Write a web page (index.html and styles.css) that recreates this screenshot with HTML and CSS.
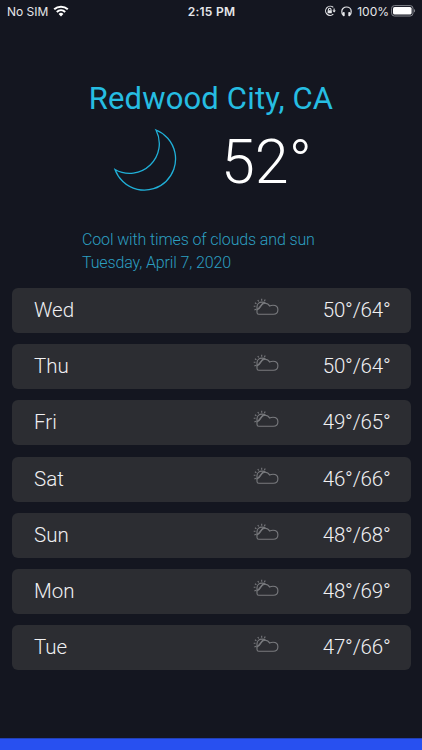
FILE: index.html
```
<!DOCTYPE html>
<html lang="en">
<head>
<meta charset="utf-8">
<title>Weather</title>
<link rel="stylesheet" href="styles.css">
</head>
<body>
<svg width="0" height="0" class="defs" aria-hidden="true">
  <symbol id="partly" viewBox="0 0 26 18">
    <path d="M5.8 16.3C4.6 16.3 4 15.6 4 14.5V11.8C5.8 11.6 6.6 10.4 7.4 9C8.6 6.8 9.4 5.2 12 5.2C14.3 5.2 15.7 6.2 16.6 8.1C17.8 7.5 18.8 7.3 20 7.3C22.8 7.3 24.9 9 24.9 11.8C24.9 14.6 22.8 16.3 20.3 16.3Z"/>
    <path d="M4 12.2V8.8C4 6 6.2 4.1 9 4.1C10.6 4.1 11.6 4.5 12.6 5.3M4.6 11.5L10.2 4.6"/>
    <path d="M8.7.8V2.7M4.8 2L5.7 3.5M12.2 1.6L11.4 3.2M1.9 4.8L3.4 5.7M.7 8.2H2.5M1.4 12L2.9 11.2"/>
  </symbol>
</svg>
<div class="screen">
  <header class="status">
    <div class="left"><span class="carrier">No SIM</span>
      <svg class="wifi" width="16" height="12" viewBox="0 0 16 12"><path d="M1.2 4.3A10 10 0 0 1 14.8 4.3M3.8 6.9A6.2 6.2 0 0 1 12.2 6.9"/><path class="dot" d="M8 11.4L5.6 9A3.4 3.4 0 0 1 10.4 9Z"/></svg>
    </div>
    <div class="clock">2:15 PM</div>
    <div class="right">
      <svg class="lock" width="12" height="12" viewBox="0 0 12 12"><path d="M9.3 2.4A4.6 4.6 0 1 0 9.3 9.2M10.1 3.6V6.2"/><path class="solid" d="M8.4 5.6H11.9L10.1 7.6Z"/><path d="M4.4 5.5V4.5A1.3 1.3 0 0 1 7 4.5V5.5"/><rect x="3.6" y="5.3" width="4.2" height="3" rx=".4"/></svg>
      <svg class="phones" width="11" height="11" viewBox="0 0 11 11"><path d="M2.2 9C1 8 .7 6.8.8 5.3A4.7 4.3 0 0 1 10.2 5.3C10.3 6.8 10 8 8.8 9"/><rect x="1.8" y="6" width="1.9" height="4.3" rx=".8"/><rect x="7.3" y="6" width="1.9" height="4.3" rx=".8"/></svg>
      <span class="pct">100%</span>
      <svg class="battery" width="25" height="12" viewBox="0 0 25 12"><rect class="shell" x=".6" y=".6" width="21.4" height="10.4" rx="2.8"/><rect class="charge" x="2" y="2" width="18.6" height="7.6" rx="1.6"/><path class="cap" d="M23 4V7.6C24.5 7 24.5 4.6 23 4Z"/></svg>
    </div>
  </header>
  <main>
    <h1>Redwood City, CA</h1>
    <section class="now">
      <svg class="moon" width="64" height="64" viewBox="113 128 64 64"><path d="M156 130A31.2 31.2 0 1 1 115 169.5A29.7 29.7 0 0 0 156 130Z"/></svg>
      <div class="temp">52°</div>
    </section>
    <div class="summary"><p class="desc">Cool with times of clouds and sun</p><p class="date">Tuesday, April 7, 2020</p></div>
    <ul class="days">
      <li><span class="day">Wed</span><svg><use href="#partly"/></svg><span class="range">50°/64°</span></li>
      <li><span class="day">Thu</span><svg><use href="#partly"/></svg><span class="range">50°/64°</span></li>
      <li><span class="day">Fri</span><svg><use href="#partly"/></svg><span class="range">49°/65°</span></li>
      <li><span class="day">Sat</span><svg><use href="#partly"/></svg><span class="range">46°/66°</span></li>
      <li><span class="day">Sun</span><svg><use href="#partly"/></svg><span class="range">48°/68°</span></li>
      <li><span class="day">Mon</span><svg><use href="#partly"/></svg><span class="range">48°/69°</span></li>
      <li><span class="day">Tue</span><svg><use href="#partly"/></svg><span class="range">47°/66°</span></li>
    </ul>
  </main>
  <footer></footer>
</div>
</body>
</html>
```
FILE: styles.css
```
* { box-sizing: border-box; margin: 0; padding: 0; }
body { background: #141620; font-family: Roboto, sans-serif; color: #fff; overflow: hidden; }
.defs { display: block; }
.screen { width: 422px; height: 750px; display: flex; flex-direction: column; }
svg { fill: none; flex: none; }
.status { height: 22px; display: grid; grid-template-columns: 1fr auto 1fr; align-items: center; padding: 0 6px 0 7px; font-family: Inter, sans-serif; font-size: 12px; color: #e6e7ea; }
.left, .right { display: flex; align-items: center; }
.left { gap: 5px; }
.right { justify-content: flex-end; }
.clock { font-weight: 600; letter-spacing: .25px; }
.wifi { stroke: #fff; stroke-width: 2; margin-top: -1px; }
.wifi .dot { fill: #fff; stroke: none; }
.lock { stroke: #e6e7ea; stroke-width: 1.1; margin-right: 5px; }
.lock rect, .lock .solid { fill: #e6e7ea; stroke: none; }
.phones { stroke: #e6e7ea; stroke-width: 1.2; margin-right: 5px; }
.phones rect { fill: #e6e7ea; stroke: none; }
.pct { margin-right: 2px; }
.shell { stroke: #83858c; stroke-width: 1; }
.charge { fill: #fff; }
.cap { fill: #83858c; }
main { flex: 1; }
h1 { margin-top: 58px; height: 38px; line-height: 38px; text-align: center; font-size: 31px; font-weight: 400; letter-spacing: .16px; color: #26bde2; }
.now { display: flex; height: 74px; padding: 10px 0 0 113px; }
.moon { stroke: #20b0d8; stroke-width: 1.3; }
.temp { margin-left: 44px; padding-top: 2px; font-size: 61px; line-height: 64px; font-weight: 300; }
.summary { margin: 37px 0 0 82px; font-size: 16px; line-height: 22.5px; font-weight: 300; letter-spacing: -.13px; color: #2c9fc0; }
.days { list-style: none; display: grid; gap: 11.2px; margin: 12px 11.5px 0; padding-top: 2px; }
.days li { height: 45px; border-radius: 6px; background: #2c2d32; display: grid; grid-template-columns: 218.5px 26px 1fr; align-items: center; padding: 0 20px 1px 22.5px; font-size: 20.5px; font-weight: 300; color: #f0f0f2; }
.days svg { width: 26px; height: 18px; stroke: #797a7e; stroke-width: 1.1; margin-top: -6px; }
.range { text-align: right; letter-spacing: -.2px; }
footer { height: 12px; background: #2850f0; border-top: 1px solid #2140b5; }
```
